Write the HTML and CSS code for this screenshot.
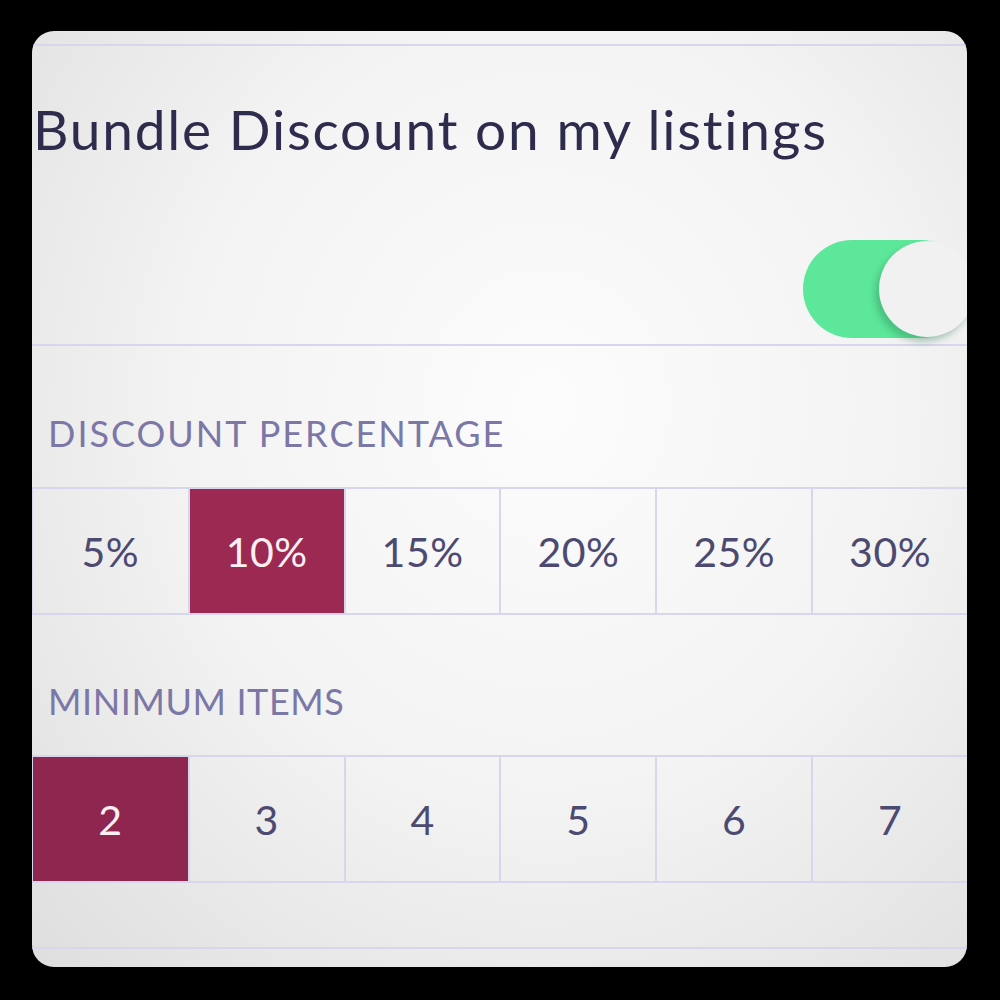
FILE: index.html
```html
<!DOCTYPE html>
<html lang="en">
<head>
    <meta charset="UTF-8">
    <title>Bundle Discount</title>
    <link rel="stylesheet" href="styles.css">
</head>
<body>

    <div class="card">
        <div class="rule top"></div>

        <h1 class="title">Bundle Discount on my listings</h1>

        <div class="toggle-row">
            <div class="toggle on">
                <span class="knob"></span>
            </div>
        </div>

        <div class="rule"></div>

        <h3 class="label first">DISCOUNT PERCENTAGE</h3>
        <div class="options">
            <div class="opt">5%</div>
            <div class="opt selected">10%</div>
            <div class="opt">15%</div>
            <div class="opt">20%</div>
            <div class="opt">25%</div>
            <div class="opt">30%</div>
        </div>

        <h3 class="label narrow">MINIMUM ITEMS</h3>
        <div class="options">
            <div class="opt selected dark">2</div>
            <div class="opt">3</div>
            <div class="opt">4</div>
            <div class="opt">5</div>
            <div class="opt">6</div>
            <div class="opt">7</div>
        </div>

        <div class="rule bottom"></div>
    </div>

</body>
</html>
```

FILE: styles.css
```css
html, body {
    margin: 0;
    background: #000;
}
body {
    padding: 31px 33px 33px 32px;
    font-family: Lato, "Open Sans", sans-serif;
}
.card {
    height: 936px;
    border-radius: 22px;
    overflow: hidden;
    background: radial-gradient(ellipse at 55% 40%, #fcfcfc 0%, #f3f3f3 50%, #dedede 100%);
}
.rule {
    height: 2px;
    background: #d9d5ee;
}
.rule.top {
    margin-top: 13px;
}
.rule.bottom {
    margin-top: 64px;
}
.title {
    margin: 50px 0 0 1px;
    font-size: 55px;
    line-height: 66px;
    font-weight: 400;
    color: #2e2c4c;
    letter-spacing: 1.8px;
}
.toggle-row {
    height: 182px;
    display: flex;
    justify-content: flex-end;
    align-items: flex-end;
}
.toggle {
    width: 167px;
    height: 98px;
    margin: 0 -3px 6px 0;
    border-radius: 49px;
    background: #5ce79a;
    display: flex;
    align-items: center;
    justify-content: flex-end;
}
.knob {
    width: 96px;
    height: 96px;
    margin-right: -5px;
    border-radius: 50%;
    background: #f1f1f1;
    box-shadow: -4px 5px 6px rgba(40, 120, 80, 0.35);
}
.label {
    margin: 64px 0 0 16px;
    font-size: 36px;
    line-height: 44px;
    font-weight: 400;
    color: #7b77a6;
    letter-spacing: 2px;
}
.label.first {
    margin-top: 65px;
}
.label.narrow {
    letter-spacing: 0.6px;
}
.options {
    margin-top: 32px;
    display: grid;
    grid-template-columns: repeat(6, 1fr);
    border-top: 2px solid #d9d5ee;
    border-bottom: 2px solid #d9d5ee;
}
.opt {
    height: 124px;
    display: flex;
    align-items: center;
    justify-content: center;
    font-size: 41px;
    color: #4d4a72;
    letter-spacing: 0.5px;
    border-left: 2px solid #d9d5ee;
}
.opt:first-child {
    border-left: 1px solid #d9d5ee;
}
.opt.selected {
    background: #9b2952;
    color: #fbeff4;
}
.opt.dark {
    background: #8e2650;
}
```
